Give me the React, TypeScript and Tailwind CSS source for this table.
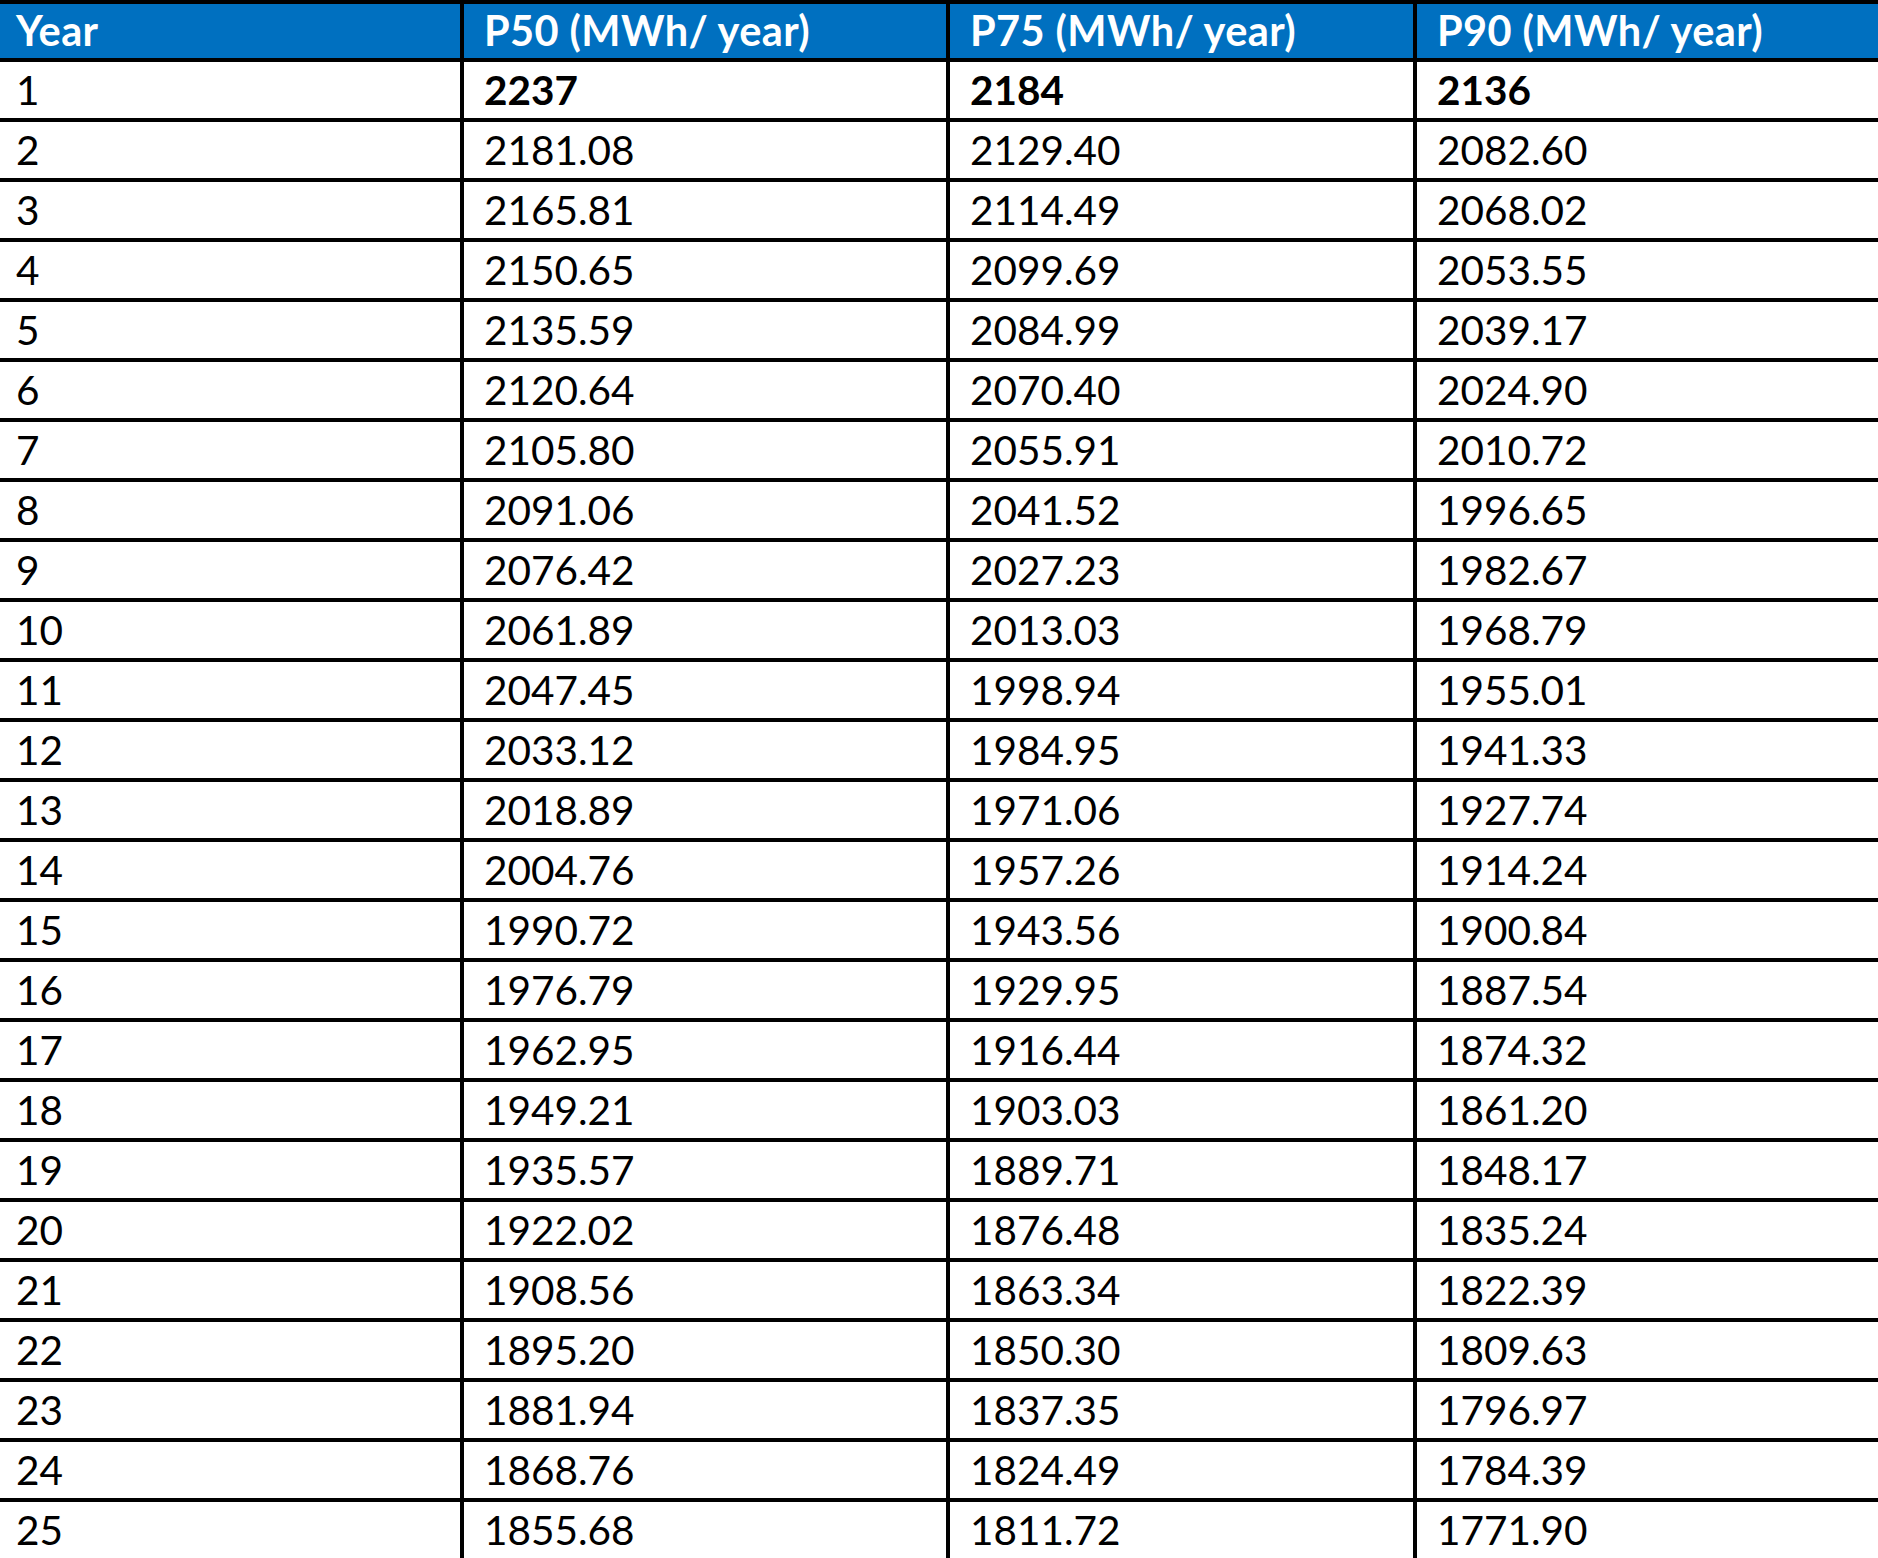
import React from 'react';

const rows: [string, string, string, string][] = [
  ['1', '2237', '2184', '2136'],
  ['2', '2181.08', '2129.40', '2082.60'],
  ['3', '2165.81', '2114.49', '2068.02'],
  ['4', '2150.65', '2099.69', '2053.55'],
  ['5', '2135.59', '2084.99', '2039.17'],
  ['6', '2120.64', '2070.40', '2024.90'],
  ['7', '2105.80', '2055.91', '2010.72'],
  ['8', '2091.06', '2041.52', '1996.65'],
  ['9', '2076.42', '2027.23', '1982.67'],
  ['10', '2061.89', '2013.03', '1968.79'],
  ['11', '2047.45', '1998.94', '1955.01'],
  ['12', '2033.12', '1984.95', '1941.33'],
  ['13', '2018.89', '1971.06', '1927.74'],
  ['14', '2004.76', '1957.26', '1914.24'],
  ['15', '1990.72', '1943.56', '1900.84'],
  ['16', '1976.79', '1929.95', '1887.54'],
  ['17', '1962.95', '1916.44', '1874.32'],
  ['18', '1949.21', '1903.03', '1861.20'],
  ['19', '1935.57', '1889.71', '1848.17'],
  ['20', '1922.02', '1876.48', '1835.24'],
  ['21', '1908.56', '1863.34', '1822.39'],
  ['22', '1895.20', '1850.30', '1809.63'],
  ['23', '1881.94', '1837.35', '1796.97'],
  ['24', '1868.76', '1824.49', '1784.39'],
  ['25', '1855.68', '1811.72', '1771.90'],
];

const headers = ['Year', 'P50 (MWh/ year)', 'P75 (MWh/ year)', 'P90 (MWh/ year)'];

// shared column template: first col has no left rule, the rest carry a 4px one
const gridCols = 'grid grid-cols-[460px_486px_467px_1fr]';

const cellClass = (i: number) =>
  i === 0
    ? 'flex items-center pl-[16px]'
    : 'flex items-center pl-[20px] border-l-4 border-black';

export default function App() {
  return (
    <div
      className="w-[1878px] h-[1558px] bg-white text-black border-t-4 border-black overflow-hidden"
      style={{ fontFamily: 'Lato, "Open Sans", sans-serif' }}
    >
      {/* header */}
      <div
        className={`${gridCols} h-[54px] bg-[#0070c0] text-white font-bold text-[41.5px] leading-none tracking-[0.4px]`}
      >
        {headers.map((h, i) => (
          <div key={h} className={`${cellClass(i)} pb-[1px]`}>
            {h}
          </div>
        ))}
      </div>

      {/* body rows */}
      {rows.map((r, ri) => (
        <div
          key={r[0]}
          className={`${gridCols} h-[60px] border-t-4 border-black text-[40.5px] leading-none`}
        >
          {r.map((v, ci) => (
            <div
              key={ci}
              className={`${cellClass(ci)} ${ri === 0 && ci > 0 ? 'font-bold' : 'font-normal'}`}
            >
              {v}
            </div>
          ))}
        </div>
      ))}
    </div>
  );
}
